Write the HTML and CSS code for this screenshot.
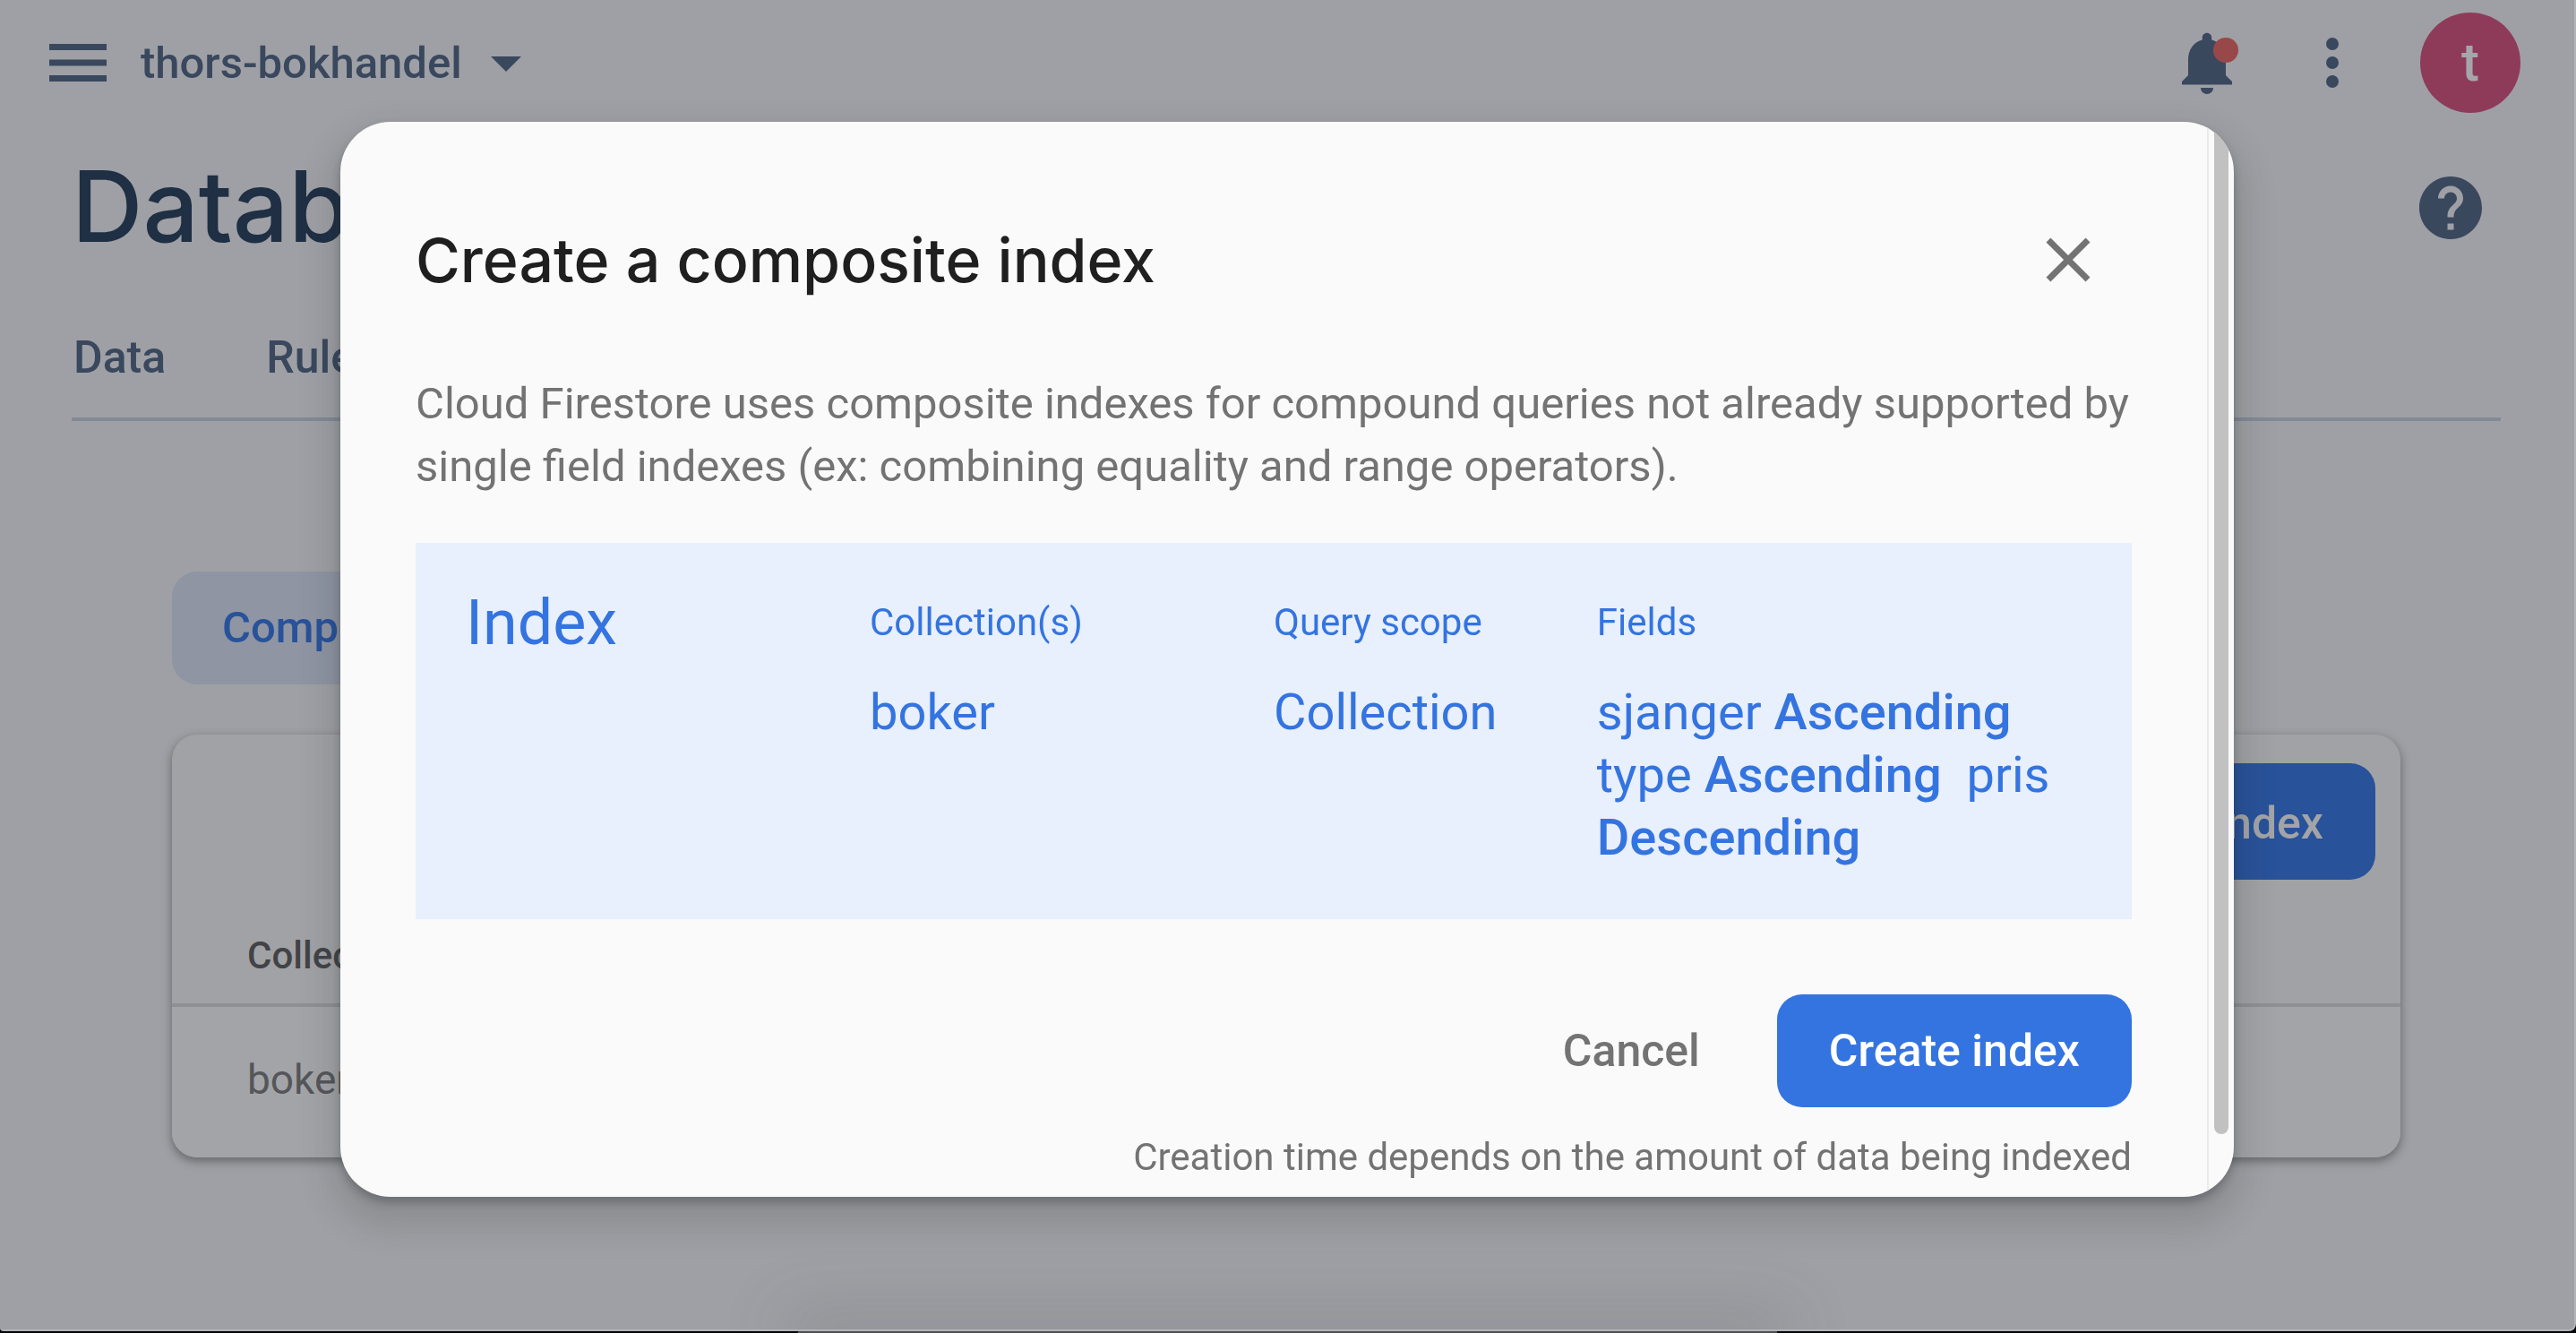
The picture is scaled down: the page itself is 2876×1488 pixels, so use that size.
FILE: index.html
```html
<!DOCTYPE html>
<html lang="en">
<head>
<meta charset="utf-8">
<title>Database indexes</title>
<link rel="stylesheet" href="styles.css">
</head>
<body>
<div class="window">
  <header class="topbar">
    <button class="icon-btn menu" aria-label="Open navigation">
      <svg viewBox="0 0 64 42" width="64" height="42"><path d="M0 0h64v7H0zM0 17.500h64v7H0zM0 35h64v7H0z"/></svg>
    </button>
    <button class="project">thors-bokhandel
      <svg viewBox="0 0 34 17" width="34" height="17"><path d="M0 0h34L17 17z"/></svg>
    </button>
    <div class="topbar-actions">
      <button class="icon-btn bell" aria-label="Notifications">
        <svg viewBox="0 0 24 24" width="84" height="84"><path d="M12 22c1.100 0 2-.9 2-2h-4c0 1.100.9 2 2 2zm6-6v-5c0-3.070-1.640-5.640-4.500-6.320V4c0-.83-.67-1.500-1.500-1.500s-1.500.67-1.500 1.500v.68C7.630 5.360 6 7.920 6 11v5l-2 2v1h16v-1l-2-2z"/></svg>
        <span class="badge"></span>
      </button>
      <button class="icon-btn" aria-label="More options">
        <svg viewBox="0 0 24 24" width="84" height="84"><circle cx="12" cy="6" r="2"/><circle cx="12" cy="12" r="2"/><circle cx="12" cy="18" r="2"/></svg>
      </button>
      <button class="avatar" aria-label="Account">t</button>
    </div>
  </header>

  <main class="page">
    <div class="page-head">
      <h1>Database</h1>
      <button class="icon-btn" aria-label="Help">
        <svg viewBox="0 0 24 24" width="84" height="84"><path d="M12 2C6.480 2 2 6.480 2 12s4.480 10 10 10 10-4.480 10-10S17.520 2 12 2zm1 17h-2v-2h2v2zm2.070-7.750l-.9.920C13.450 12.900 13 13.500 13 15h-2v-.5c0-1.100.45-2.100 1.170-2.830l1.240-1.260c.37-.36.59-.86.59-1.410 0-1.100-.9-2-2-2s-2 .9-2 2H8c0-2.210 1.790-4 4-4s4 1.790 4 4c0 .88-.36 1.680-.93 2.250z"/></svg>
      </button>
    </div>
    <nav class="tabs">
      <a href="#data">Data</a>
      <a href="#rules">Rules</a>
    </nav>
    <section class="indexes">
      <button class="chip">Composite</button>
      <div class="card">
        <div class="card-tools"><button class="btn dimmed">Create index</button></div>
        <table class="index-table">
          <thead><tr><th>Collection ID</th></tr></thead>
          <tbody><tr><td>boker</td></tr></tbody>
        </table>
      </div>
    </section>
  </main>
  <div class="sheet"></div>
</div>

<div class="overlay">
  <div class="dialog" role="dialog" aria-modal="true" aria-labelledby="dialog-title">
    <div class="dialog-body">
      <div class="dialog-head">
        <h2 id="dialog-title">Create a composite index</h2>
        <button class="icon-btn close" aria-label="Close">
          <svg viewBox="0 0 24 24" width="84" height="84"><path d="M19 6.410L17.590 5 12 10.590 6.410 5 5 6.410 10.590 12 5 17.590 6.410 19 12 13.410 17.590 19 19 17.590 13.410 12z"/></svg>
        </button>
      </div>
      <p class="intro">Cloud Firestore uses composite indexes for compound queries not already supported by single field indexes (ex: combining equality and range operators).</p>
      <div class="summary">
        <h3>Index</h3>
        <dl><dt>Collection(s)</dt><dd>boker</dd></dl>
        <dl><dt>Query scope</dt><dd>Collection</dd></dl>
        <dl><dt>Fields</dt><dd>sjanger <b>Ascending</b> type <b>Ascending</b>&nbsp; pris <b>Descending</b></dd></dl>
      </div>
      <div class="actions">
        <button class="btn plain">Cancel</button>
        <button class="btn">Create index</button>
      </div>
      <p class="note">Creation time depends on the amount of data being indexed</p>
    </div>
    <div class="scrollbar"><div class="thumb"></div></div>
  </div>
</div>
</body>
</html>
```
FILE: styles.css
```css
* { box-sizing: border-box; }

body {
  margin: 0;
  background: linear-gradient(90deg, #05060a 31%, #4d4f51 31% 69%, #05060a 69%);
  font-family: Roboto, sans-serif;
  font-size: 49px;
  line-height: 70px;
}

h1, h2, h3, p, dl, dd { margin: 0; font-weight: 400; }

button {
  border: 0;
  padding: 0;
  background: none;
  font: inherit;
  color: inherit;
}

svg { display: block; fill: currentColor; }

.window {
  position: relative;
  overflow: hidden;
  height: calc(100vh - 2px);
  border: solid #b2b3b7;
  border-width: 0 2px 2px 0;
  border-radius: 0 0 8px 4px;
  background: #9fa0a5;
  color: #3a485e;
}

/* Top bar */
.topbar {
  display: flex;
  align-items: center;
  height: 140px;
  padding: 0 60px 0 55px;
}

.project {
  display: flex;
  align-items: center;
  gap: 32px;
  margin-left: 38px;
  padding-top: 2px;
  font-weight: 500;
}

.topbar-actions {
  display: flex;
  align-items: center;
  gap: 56px;
  margin-left: auto;
}

.bell { position: relative; }

.badge {
  position: absolute;
  top: 14px;
  right: 7px;
  width: 28px;
  height: 28px;
  border-radius: 50%;
  background: #984848;
}

.avatar {
  width: 112px;
  height: 112px;
  border-radius: 50%;
  background: #8e3b59;
  color: #a5a6aa;
  font-size: 60px;
  font-weight: 500;
}

/* Page behind the dialog */
.page { padding: 22px 82px 0 80px; }

.page-head {
  display: flex;
  align-items: center;
  justify-content: space-between;
  height: 140px;
  padding-right: 14px;
}

h1 {
  color: #1f2f44;
  font: 500 110px/136px Inter, sans-serif;
}

.page-head h1 { padding-bottom: 4px; }

.tabs {
  display: flex;
  gap: 112px;
  height: 168px;
  padding: 62px 2px 0;
  border-bottom: 4px solid #828a96;
  font-size: 50px;
  font-weight: 500;
}

.tabs a { color: inherit; text-decoration: none; }

.indexes { padding: 168px 112px 0; }

.chip {
  height: 126px;
  padding: 0 56px;
  border-radius: 28px;
  background: #8f95a3;
  color: #28529a;
  font-weight: 500;
}

.card {
  overflow: hidden;
  margin-top: 56px;
  border-radius: 28px;
  background: #a1a2a5;
  box-shadow: 0 4px 7px rgba(40, 44, 48, .3), 0 4px 10px 4px rgba(40, 44, 48, .15);
}

.card-tools {
  display: flex;
  justify-content: flex-end;
  padding: 32px 28px 0;
}

.index-table { width: 100%; border-collapse: collapse; text-align: left; }

.index-table th {
  padding: 50px 84px 18px;
  border-bottom: 4px solid #8e9094;
  color: #424346;
  font-size: 42px;
  font-weight: 500;
}

.index-table td {
  padding: 46px 84px 52px;
  background: #a3a4a7;
  color: #55565a;
  font-size: 46px;
}

.sheet {
  position: absolute;
  bottom: -4px;
  left: 31%;
  right: 31%;
  height: 4px;
  box-shadow: 0 0 70px 14px rgba(80, 82, 84, .3);
}

/* Buttons */
.btn {
  height: 126px;
  padding: 0 58px;
  border-radius: 28px;
  background: #3474e0;
  color: #fff;
  font-size: 50px;
  font-weight: 500;
}

.btn.plain { background: none; color: #737373; }

.btn.dimmed {
  height: 130px;
  padding-top: 4px;
  background: #28529a;
  color: #a3a4a7;
}

/* Dialog */
.overlay {
  position: fixed;
  inset: 0 2px 0 0;
  display: flex;
  align-items: flex-start;
  justify-content: center;
  padding: 136px 56px 0;
}

.dialog {
  display: flex;
  overflow: hidden;
  width: 100%;
  max-width: 2114px;
  border-radius: 56px;
  background: #fafafa;
  box-shadow: 0 7px 10px rgba(40, 44, 48, .3), 0 21px 35px 14px rgba(40, 44, 48, .15);
  color: #737373;
}

.dialog-body { flex: 1; padding: 98px 84px 16px; }

.dialog-head {
  display: flex;
  align-items: center;
  justify-content: space-between;
  height: 112px;
  padding-right: 29px;
}

h2 {
  color: #1f1f1f;
  font: 500 68px/84px Inter, sans-serif;
}

.intro { margin: 70px 0 50px; }

.summary {
  display: grid;
  grid-template-columns: 5fr 5fr 4fr 6fr;
  padding: 54px 56px 56px;
  background: #e8effd;
  color: #3474e0;
}

.summary h3 { font-size: 70px; }
.summary dt { font-size: 42px; }
.summary dd { margin-top: 30px; font-size: 56px; }
.summary b { font-weight: 500; }

.actions {
  display: flex;
  justify-content: flex-end;
  gap: 28px;
  margin: 84px 0 28px;
}

.note {
  font-size: 42px;
  line-height: 56px;
  text-align: right;
}

.scrollbar {
  flex: none;
  width: 30px;
  padding: 4px 6px 70px;
  border-left: 2px solid #ebebeb;
}

.thumb {
  width: 16px;
  height: 100%;
  border-radius: 8px;
  background: #c1c1c1;
}
```
